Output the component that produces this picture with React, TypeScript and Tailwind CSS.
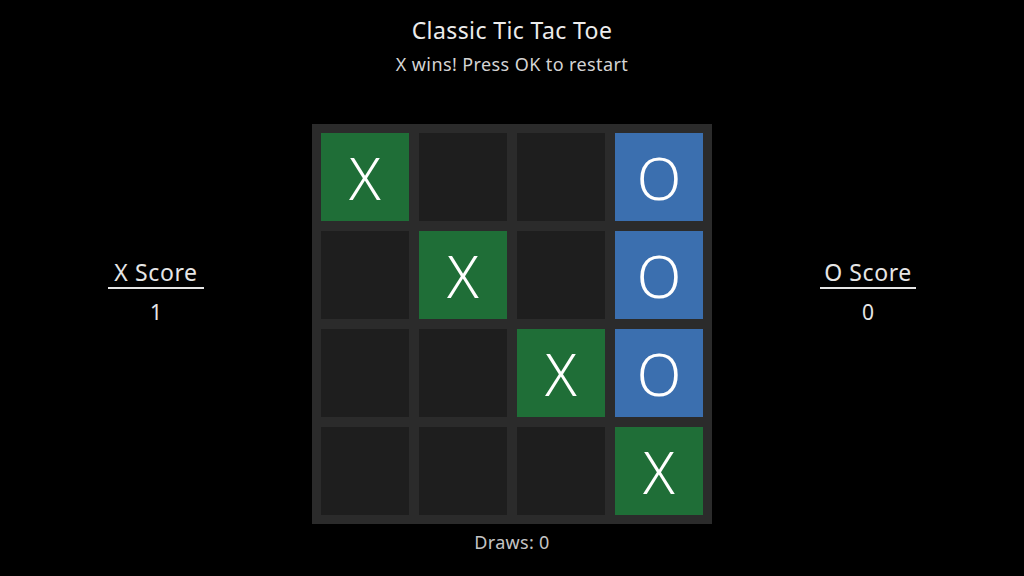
const board: ("X" | "O" | "")[] = [
  "X", "", "", "O",
  "", "X", "", "O",
  "", "", "X", "O",
  "", "", "", "X",
];

function Score({ label, value }: { label: string; value: number }) {
  return (
    <div className="w-[96px] mt-[134px] flex flex-col items-center text-[#e6e6e6]">
      <div className="text-[23px] leading-[28px] tracking-[0.6px]">{label}</div>
      <div className="w-full h-[2px] mt-[1px] bg-[#e6e6e6]" />
      <div className="text-[21px] leading-[28px] mt-[9px]">{value}</div>
    </div>
  );
}

export default function App() {
  return (
    <main
      className="w-full h-[576px] bg-black flex flex-col items-center overflow-hidden"
      style={{ fontFamily: '"Noto Sans", "Open Sans", sans-serif' }}
    >
      <h1 className="pt-[15px] text-[23px] leading-[30px] tracking-[0.4px] text-[#ececec]">Classic Tic Tac Toe</h1>
      <p className="mt-[7px] text-[18px] leading-[24px] tracking-[0.4px] text-[#d4d4d4]">X wins! Press OK to restart</p>

      <div className="mt-[48px] flex items-start gap-[108px]">
        <Score label="X Score" value={1} />

        <div className="w-[400px] h-[400px] bg-[#2b2b2b] p-[9px] grid grid-cols-4 gap-[10px]">
          {board.map((cell, i) => (
            <div
              key={i}
              className={
                cell === "X"
                  ? "bg-[#1f6e37] flex items-center justify-center text-white text-[58px] font-light"
                  : cell === "O"
                  ? "bg-[#3b6faf] flex items-center justify-center text-white text-[58px] font-light"
                  : "bg-[#1e1e1e]"
              }
            >
              {cell}
            </div>
          ))}
        </div>

        <Score label="O Score" value={0} />
      </div>

      <p className="mt-[8px] text-[18px] leading-[20px] tracking-[0.3px] text-[#c4c4c4]">Draws: 0</p>
    </main>
  );
}
